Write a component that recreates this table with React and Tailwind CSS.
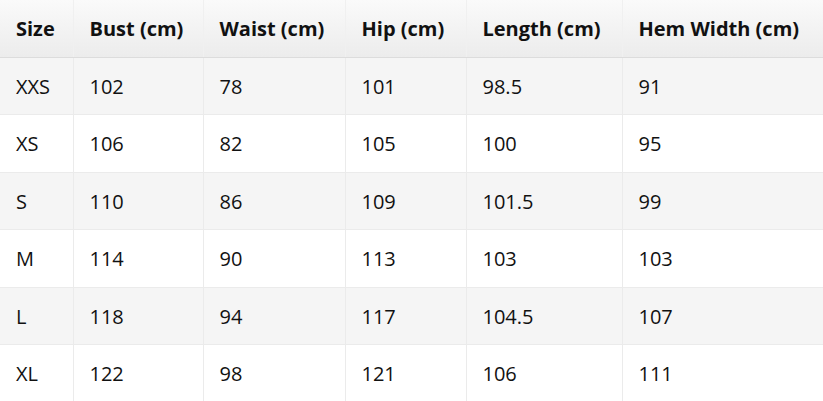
const headers = ['Size', 'Bust (cm)', 'Waist (cm)', 'Hip (cm)', 'Length (cm)', 'Hem Width (cm)'];
const widths = ['w-[73px]', 'w-[130px]', 'w-[142px]', 'w-[121px]', 'w-[156px]', 'w-[201px]'];

const rows = [
  ['XXS', '102', '78', '101', '98.5', '91'],
  ['XS', '106', '82', '105', '100', '95'],
  ['S', '110', '86', '109', '101.5', '99'],
  ['M', '114', '90', '113', '103', '103'],
  ['L', '118', '94', '117', '104.5', '107'],
  ['XL', '122', '98', '121', '106', '111'],
];

export default function App() {
  return (
    <div className="w-[823px] bg-white text-[#111] font-['Open_Sans',sans-serif]">
      <table className="w-full table-fixed border-collapse text-[20px] leading-[26px]">
        <colgroup>
          {widths.map((w) => (
            <col key={w} className={w} />
          ))}
        </colgroup>
        <thead>
          <tr className="bg-linear-to-b from-[#fafafa] to-[#ececec]">
            {headers.map((h, i) => (
              <th
                key={h}
                className={`h-[57px] border-b border-[#dcdcdc] px-4 pt-[2px] text-left font-bold whitespace-nowrap ${
                  i > 0 ? 'border-l border-l-[#f0f0f0]' : ''
                }`}
              >
                {h}
              </th>
            ))}
          </tr>
        </thead>
        <tbody>
          {rows.map((row, r) => (
            <tr key={row[0]} className={r % 2 === 0 ? 'bg-[#f5f5f5]' : 'bg-white'}>
              {row.map((cell, i) => (
                <td
                  key={i}
                  className={`h-[57.5px] border-b border-[#ebebeb] px-4 pt-[2px] ${i > 0 ? 'border-l border-l-[#ebebeb]' : ''}`}
                >
                  {cell}
                </td>
              ))}
            </tr>
          ))}
        </tbody>
      </table>
    </div>
  );
}
